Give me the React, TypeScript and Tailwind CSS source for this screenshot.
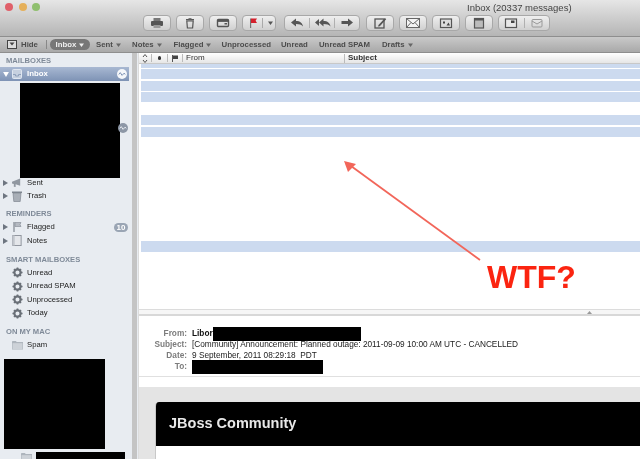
import React from "react";

const Btn = ({ w, children }: { w: string; children: React.ReactNode }) => (
  <div className={`${w} h-[16px] flex items-center justify-center rounded-[4px] border border-[#a8a8a8] bg-gradient-to-b from-[#efefef] to-[#d0d0d0]`}>
    {children}
  </div>
);

const I = ({ children, w = 14, h = 12 }: { children: React.ReactNode; w?: number; h?: number }) => (
  <svg width={w} height={h} viewBox={`0 0 ${w} ${h}`} className="block">{children}</svg>
);

const Printer = () => (
  <I>
    <rect x="3.5" y="1" width="7" height="3" fill="#777" />
    <rect x="1" y="4" width="12" height="5" rx="1" fill="#555" />
    <rect x="3.5" y="8" width="7" height="3" fill="#999" />
  </I>
);
const Bin = () => (
  <I>
    <rect x="3" y="2" width="8" height="1.4" fill="#555" />
    <rect x="5.5" y="1" width="3" height="1.2" fill="#777" />
    <path d="M3.8 4h6.4l-.6 7H4.4z" fill="none" stroke="#555" strokeWidth="1.2" />
  </I>
);
const Junk = () => (
  <I>
    <rect x="1.5" y="2.5" width="11" height="7" rx="1" fill="none" stroke="#555" strokeWidth="1.4" />
    <rect x="1.5" y="2.5" width="11" height="2.4" fill="#555" />
    <rect x="8.5" y="6" width="2.5" height="1.5" fill="#555" />
  </I>
);
const Flag = () => (
  <I>
    <rect x="4" y="1.5" width="1.2" height="9.5" fill="#777" />
    <path d="M5 1.5h6l-1.4 2.2L11 6H5z" fill="#d4202c" />
  </I>
);
const Reply = () => (
  <I>
    <path d="M1 5.5 6 1.5v2.4c4 0 6.5 2 7 5.6-1.6-2-3.6-2.6-7-2.6v2.6z" fill="#555" />
  </I>
);
const ReplyAll = () => (
  <I w={17}>
    <path d="M1 5.5 5 2v7z" fill="#555" />
    <path d="M5 5.5 9.5 1.5v2.4c4 0 6.5 2 7 5.6-1.6-2-3.6-2.6-7-2.6v2.6z" fill="#555" />
  </I>
);
const Forward = () => (
  <I>
    <path d="M13 5.5 8 1.5v2.5H1.5v3H8v2.5z" fill="#555" />
  </I>
);
const Compose = () => (
  <I>
    <rect x="2" y="2" width="9" height="9" fill="none" stroke="#555" strokeWidth="1.3" />
    <path d="M5.5 8 12 1l1.2 1.2L6.8 9.2 5 9.6z" fill="#555" />
  </I>
);
const Mail = () => (
  <I w={16}>
    <rect x="1.5" y="1.5" width="13" height="9" fill="#f4f4f4" stroke="#666" />
    <path d="M1.5 1.5 8 7l6.5-5.5M1.5 10.5 6 5.5M14.5 10.5 10 5.5" fill="none" stroke="#666" />
  </I>
);
const Note = () => (
  <I>
    <rect x="1.5" y="2" width="11" height="8.5" fill="#ddd" stroke="#555" strokeWidth="1.2" />
    <rect x="4" y="4.5" width="2" height="2" fill="#444" />
    <path d="M7.5 8.5l2-3 1.5 3z" fill="#444" />
  </I>
);
const Pane = () => (
  <I>
    <rect x="2.5" y="1.5" width="9" height="9.5" fill="#bbb" stroke="#555" strokeWidth="1.2" />
    <rect x="2.5" y="1.5" width="9" height="2" fill="#555" />
  </I>
);
const Photo = () => (
  <I>
    <rect x="1.5" y="2" width="11" height="8.5" fill="#e8e8e8" stroke="#555" strokeWidth="1.2" />
    <rect x="7" y="3.5" width="3.5" height="2.5" fill="#444" />
  </I>
);
const MailGray = () => (
  <I>
    <rect x="2" y="2.5" width="10" height="7.5" rx="1" fill="none" stroke="#999" />
    <path d="M2 4l5 3 5-3" fill="none" stroke="#999" />
  </I>
);

const Caret = ({ c = "#666" }: { c?: string }) => (
  <svg width="5" height="4" viewBox="0 0 5 4" className="ml-[3px]"><path d="M0 .5h5L2.5 4z" fill={c} /></svg>
);

const Fav = ({ t, caret = false, w }: { t: string; caret?: boolean; w: string }) => (
  <div className={`${w} shrink-0 flex items-center`}>
    <span>{t}</span>
    {caret && <Caret />}
  </div>
);

const Tri = () => (
  <svg width="5" height="6" viewBox="0 0 5 6" className="shrink-0"><path d="M0 0l5 3-5 3z" fill="#6d7580" /></svg>
);

const Gear = () => (
  <svg width="11" height="11" viewBox="0 0 12 12" className="shrink-0">
    <circle cx="6" cy="6" r="3.4" fill="none" stroke="#6a7078" strokeWidth="2.4" />
    <path d="M6 .5v2M6 9.5v2M.5 6h2M9.5 6h2M2.2 2.2l1.4 1.4M8.4 8.4l1.4 1.4M2.2 9.8l1.4-1.4M8.4 3.6l1.4-1.4" stroke="#6a7078" strokeWidth="1.8" />
  </svg>
);
const Sent = () => (
  <svg width="10" height="10" viewBox="0 0 11 11" className="shrink-0">
    <path d="M0 4l9-3.5v8L4 7v3L2 9.5V6.5L0 6z" fill="#9097a0" />
  </svg>
);
const Trash = () => (
  <svg width="10" height="12" viewBox="0 0 10 12" className="shrink-0">
    <path d="M0 1.5h10v1.5H0z" fill="#7f8690" />
    <path d="M1 3h8l-.8 8.5H1.8z" fill="#a9afb7" stroke="#7f8690" strokeWidth=".7" />
  </svg>
);
const FlagS = () => (
  <svg width="9" height="12" viewBox="0 0 9 12" className="shrink-0">
    <path d="M1 1v10" stroke="#7f8690" strokeWidth="1.2" />
    <path d="M2 1.5h6L7 3.5 8 5.5H2z" fill="#b5bac2" stroke="#7f8690" strokeWidth=".6" />
  </svg>
);
const NoteS = () => (
  <svg width="10" height="11" viewBox="0 0 10 12" className="shrink-0">
    <rect x=".5" y=".5" width="9" height="11" fill="#e4e6ea" stroke="#8b9099" />
    <rect x=".5" y=".5" width="2" height="11" fill="#c2c6cc" />
  </svg>
);
const Folder = () => (
  <svg width="11" height="10" viewBox="0 0 12 10" className="shrink-0">
    <path d="M0 1.5C0 .8.5.5 1 .5h3.2l1 1.2H12V10H0z" fill="#aeb5bd" />
    <rect x=".6" y="3" width="10.8" height="6.4" fill="#cdd2d8" />
  </svg>
);
const InboxIcon = () => (
  <svg width="10" height="10" viewBox="0 0 10 10" className="shrink-0">
    <rect x=".5" y=".5" width="9" height="9" rx="1" fill="#c6d0df" stroke="#dfe6f0" />
    <path d="M1 5.5h2.5v1.5h3V5.5H9" fill="none" stroke="#8fa0ba" />
  </svg>
);

const Section = ({ t, cls }: { t: string; cls: string }) => (
  <div className={`${cls} pl-[6px] h-[10px] leading-[10px] text-[7.6px] font-bold text-[#7f8a98]`}>{t}</div>
);

const Row = ({ icon, t, tri = false, cls = "" }: { icon: React.ReactNode; t: string; tri?: boolean; cls?: string }) => (
  <div className={`${cls} h-[13.5px] flex items-center text-[7.7px] text-[#1c1c1c]`}>
    <div className="w-[12px] pl-[3px] shrink-0">{tri && <Tri />}</div>
    <div className="w-[10px] shrink-0 flex justify-center">{icon}</div>
    <span className="ml-[5px]">{t}</span>
  </div>
);

const Sync = ({ fill, fg }: { fill: string; fg: string }) => (
  <svg width="10" height="10" viewBox="0 0 11 11"><circle cx="5.5" cy="5.5" r="5.5" fill={fill} /><path d="M2 6l1.6-2 2 3L8 4.5 9 6" fill="none" stroke={fg} strokeWidth="1.1" /></svg>
);

const blueRows = ["h-[4px] mb-px", "h-[10px] mb-[2px]", "h-[10px] mb-px", "h-[10px] mb-[13px]", "h-[10px] mb-[2px]", "h-[10px] mb-[104px]", "h-[11px]"];

const Meta = ({ k, children }: { k: string; children?: React.ReactNode }) => (
  <div className="flex h-[11px] items-center text-[8.27px] leading-[11px]">
    <div className="w-[48px] shrink-0 text-right font-bold text-[#7c7c7c]">{k}</div>
    <div className="ml-[5px] flex items-center text-[#222] whitespace-pre">{children}</div>
  </div>
);

export default function App() {
  return (
    <div className="relative w-[640px] h-[459px] overflow-hidden bg-white flex flex-col font-['Liberation_Sans',Arial,sans-serif] blur-[0.35px]">
      {/* Title bar + toolbar */}
      <div className="relative h-[37px] shrink-0 bg-gradient-to-b from-[#e6e6e6] to-[#b5b5b5] border-b border-[#8e8e8e]">
        <div className="absolute left-[5px] top-[3px] flex gap-[5.5px]">
          <div className="w-[8px] h-[8px] rounded-full bg-[#e0606a]" />
          <div className="w-[8px] h-[8px] rounded-full bg-[#e5b05a]" />
          <div className="w-[8px] h-[8px] rounded-full bg-[#8fbf6e]" />
        </div>
        <div className="absolute left-[467px] top-[1px] text-[9.5px] leading-[13px] text-[#444]">Inbox (20337 messages)</div>
        <div className="absolute left-[143px] top-[15px] flex gap-[5px]">
          <Btn w="w-[28px]"><Printer /></Btn>
          <Btn w="w-[28px]"><Bin /></Btn>
          <Btn w="w-[28px]"><Junk /></Btn>
          <Btn w="w-[34px]"><Flag /><div className="w-px h-[10px] bg-[#aaa] mx-[2px]" /><Caret c="#555" /></Btn>
          <div className="ml-[3px] flex gap-[6px]">
            <Btn w="w-[76px]">
              <div className="flex-1 flex justify-center"><Reply /></div>
              <div className="w-px h-[10px] bg-[#b0b0b0]" />
              <div className="flex-1 flex justify-center"><ReplyAll /></div>
              <div className="w-px h-[10px] bg-[#b0b0b0]" />
              <div className="flex-1 flex justify-center"><Forward /></div>
            </Btn>
            <Btn w="w-[28px]"><Compose /></Btn>
          </div>
          <Btn w="w-[28px]"><Mail /></Btn>
          <Btn w="w-[28px]"><Note /></Btn>
          <Btn w="w-[28px]"><Pane /></Btn>
          <Btn w="w-[52px]">
            <div className="flex-1 flex justify-center"><Photo /></div>
            <div className="w-px h-[10px] bg-[#b0b0b0]" />
            <div className="flex-1 flex justify-center"><MailGray /></div>
          </Btn>
        </div>
      </div>
      {/* Favorites bar */}
      <div className="h-[16px] shrink-0 flex items-center text-[7.8px] font-bold text-[#4c4c4c] bg-gradient-to-b from-[#c9c9c9] to-[#a9a9a9] border-b border-[#8e8e8e] pl-[7px]">
        <svg width="10" height="9" viewBox="0 0 10 9" className="shrink-0"><rect x=".5" y=".5" width="9" height="8" fill="#ddd" stroke="#444" /><path d="M2.5 2.5h5L5 5.5z" fill="#444" /></svg>
        <span className="ml-[4px] w-[26px]">Hide</span>
        <div className="w-px h-[9px] bg-[#888] -ml-[1px] mr-[3px]" />
        <div className="w-[40px] h-[11px] shrink-0 rounded-full bg-[#777] text-[#f0f0f0] flex items-center justify-center mr-[6px]">Inbox<Caret c="#f0f0f0" /></div>
        <Fav t="Sent" caret w="w-[36px]" />
        <Fav t="Notes" caret w="w-[41.6px]" />
        <Fav t="Flagged" caret w="w-[48px]" />
        <Fav t="Unprocessed" w="w-[59.4px]" />
        <Fav t="Unread" w="w-[38px]" />
        <Fav t="Unread SPAM" w="w-[63px]" />
        <Fav t="Drafts" caret w="w-[40px]" />
      </div>
      <div className="flex-1 min-h-0 flex">
        {/* Sidebar */}
        <div className="relative w-[131px] shrink-0 bg-[#e8ecf1] overflow-hidden">
          <Section t="MAILBOXES" cls="mt-[3px]" />
          <div className="mt-[1px] mr-[2px] h-[14px] flex items-center bg-gradient-to-b from-[#a8b8d2] to-[#7e93b5] text-[7.8px] font-bold text-white pl-[3px] pr-[2px]">
            <svg width="6" height="5" viewBox="0 0 7 6" className="shrink-0"><path d="M0 0h7L3.5 6z" fill="#fff" /></svg>
            <div className="ml-[3px]"><InboxIcon /></div>
            <span className="ml-[5px] flex-1">Inbox</span>
            <Sync fill="#f5f7fa" fg="#7e93b5" />
          </div>
          <div className="ml-[20px] mt-[2px] w-[100px] h-[95px] bg-black" />
          <div className="absolute left-[118px] top-[70px]"><Sync fill="#8d97a6" fg="#e8ecf1" /></div>
          <Row tri icon={<Sent />} t="Sent" cls="-mt-[2.25px]" />
          <Row tri icon={<Trash />} t="Trash" />
          <Section t="REMINDERS" cls="mt-[6.25px]" />
          <Row tri icon={<FlagS />} t="Flagged" cls="mt-[1.25px]" />
          <div className="absolute left-[114px] top-[170px] w-[14px] h-[9px] rounded-full bg-[#9aa5b4] text-white text-[8px] font-bold leading-[9px] text-center">10</div>
          <Row tri icon={<NoteS />} t="Notes" />
          <Section t="SMART MAILBOXES" cls="mt-[7.25px]" />
          <Row icon={<Gear />} t="Unread" cls="mt-[1.25px]" />
          <Row icon={<Gear />} t="Unread SPAM" />
          <Row icon={<Gear />} t="Unprocessed" />
          <Row icon={<Gear />} t="Today" />
          <Section t="ON MY MAC" cls="mt-[7.25px]" />
          <Row icon={<Folder />} t="Spam" cls="mt-[1.25px]" />
          <div className="ml-[4px] mt-[7.25px] w-[101px] h-[90px] bg-black" />
          <div className="mt-[3px] flex items-start pl-[21px]">
            <Folder />
            <div className="ml-[4px] w-[89px] h-[10px] bg-black" />
          </div>
        </div>
        {/* Splitter */}
        <div className="w-[8px] shrink-0 bg-[#e8ecf1] border-r border-[#dcdcdc] flex">
          <div className="ml-px w-[5px] bg-[#c4c4c4]" />
        </div>
        {/* Right */}
        <div className="flex-1 min-w-0 flex flex-col">
          <div className="h-[11px] shrink-0 flex items-center text-[8px] font-bold text-[#333] bg-gradient-to-b from-white to-[#e6e6e6] border-b border-[#c8c8c8]">
            <div className="w-[13px] flex justify-center border-r border-[#bbb] h-[8px] items-center">
              <svg width="6" height="9" viewBox="0 0 6 9"><path d="M1 3l2-2.5L5 3M1 6l2 2.5L5 6" fill="none" stroke="#555" /></svg>
            </div>
            <div className="w-[16px] flex justify-center border-r border-[#bbb] h-[8px] items-center">
              <div className="w-[3.5px] h-[3.5px] rounded-full bg-[#333]" />
            </div>
            <div className="w-[15px] flex justify-center border-r border-[#bbb] h-[8px] items-center">
              <svg width="6" height="7" viewBox="0 0 6 7"><path d="M.5 0v7" stroke="#555" /><path d="M1 .5h5v3.5H1z" fill="#444" /></svg>
            </div>
            <div className="w-[162px] pl-[3px] font-normal border-r border-[#bbb] h-[9px] flex items-center">From</div>
            <div className="pl-[3px] flex items-center">Subject</div>
          </div>
          <div className="h-[245px] shrink-0 flex flex-col bg-white">
            {blueRows.map((c, i) => (
              <div key={i} className={`${c} shrink-0 ml-[2px] bg-[#ccdaef]`} />
            ))}
          </div>
          {/* Divider */}
          <div className="h-[7px] shrink-0 bg-[#f6f6f6] border-t border-[#dcdcdc] border-b-2 border-b-[#d8d8d8] flex items-center justify-end pr-[48px]">
            <svg width="5" height="3" viewBox="0 0 5 3"><path d="M0 3l2.5-3L5 3z" fill="#999" /></svg>
          </div>
          {/* Message header */}
          <div className="h-[61px] shrink-0 bg-white border-b border-[#e0e0e0] pt-[12px]">
            <Meta k="From:"><b className="text-[#111]">Libor</b><div className="w-[148px] h-[14px] bg-black" /></Meta>
            <Meta k="Subject:">[Community] Announcement: Planned outage: 2011-09-09 10:00 AM UTC - CANCELLED</Meta>
            <Meta k="Date:">{"9 September, 2011 08:29:18  PDT"}</Meta>
            <Meta k="To:"><div className="w-[131px] h-[14px] mt-[1px] bg-black" /></Meta>
          </div>
          <div className="h-[10px] shrink-0 bg-white" />
          {/* Body */}
          <div className="flex-1 min-h-0 bg-[#e4e4e4] pl-[16px] pt-[15px]">
            <div className="h-full rounded-tl-[4px] overflow-hidden bg-white border-l border-[#c8c8c8]">
              <div className="h-[44px] bg-black flex items-center pl-[13px] text-[14.5px] font-bold text-[#e8e8e8]">JBoss Community</div>
            </div>
          </div>
        </div>
      </div>
      {/* Annotation overlay */}
      <svg width="640" height="459" className="absolute left-0 top-0 pointer-events-none">
        <path d="M480 260 L351 166" stroke="#f2665a" strokeWidth="1.8" />
        <path d="M344 161 L356 164 L348 172 Z" fill="#f2665a" />
      </svg>
      <div className="absolute left-[487px] top-[261px] text-[32px] leading-[32px] font-bold text-[#fb2410]">WTF?</div>
    </div>
  );
}
